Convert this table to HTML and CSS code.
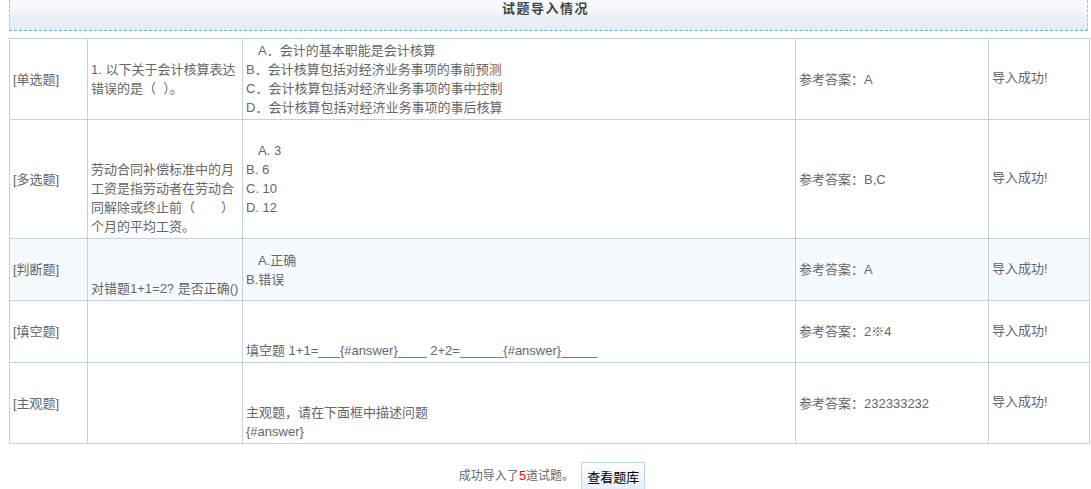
FILE: index.html
```html
<!DOCTYPE html>
<html lang="zh-CN">
<head>
<meta charset="utf-8">
<title>试题导入情况</title>
<link rel="stylesheet" href="styles.css">
</head>
<body>
<div class="page">
  <div class="header"><h1 class="title">试题导入情况</h1></div>
  <table class="result">
    <colgroup>
      <col class="c-type"><col class="c-q"><col class="c-opt"><col class="c-ans"><col class="c-st">
    </colgroup>
    <tbody>
      <tr>
        <td>[单选题]</td>
        <td>1. 以下关于会计核算表达错误的是（&nbsp;&nbsp;）。</td>
        <td class="opts">A．会计的基本职能是会计核算<br>B．会计核算包括对经济业务事项的事前预测<br>C．会计核算包括对经济业务事项的事中控制<br>D．会计核算包括对经济业务事项的事后核算</td>
        <td>参考答案：A</td>
        <td class="st">导入成功!</td>
      </tr>
      <tr>
        <td>[多选题]</td>
        <td><br><br>劳动合同补偿标准中的月工资是指劳动者在劳动合同解除或终止前（　　）个月的平均工资。</td>
        <td class="opts">A. 3<br>B. 6<br>C. 10<br>D. 12</td>
        <td>参考答案：B,C</td>
        <td class="st">导入成功!</td>
      </tr>
      <tr class="alt">
        <td>[判断题]</td>
        <td class="nowrap"><br><br>对错题1+1=2? 是否正确()</td>
        <td class="opts">A.正确<br>B.错误</td>
        <td>参考答案：A</td>
        <td class="st">导入成功!</td>
      </tr>
      <tr>
        <td>[填空题]</td>
        <td></td>
        <td><br><br>填空题 1+1=___{#answer}____ 2+2=______{#answer}_____</td>
        <td>参考答案：2※4</td>
        <td class="st">导入成功!</td>
      </tr>
      <tr>
        <td>[主观题]</td>
        <td></td>
        <td><br><br>主观题，请在下面框中描述问题<br>{#answer}</td>
        <td>参考答案：232333232</td>
        <td class="st">导入成功!</td>
      </tr>
    </tbody>
  </table>
  <div class="footer">
    <span class="summary">成功导入了<em class="count">5</em>道试题。</span>
    <button class="btn" type="button">查看题库</button>
  </div>
</div>
</body>
</html>
```

FILE: styles.css
```css
html, body {
  margin: 0;
  padding: 0;
  background: #ffffff;
}

body {
  font-family: "Liberation Sans", "Noto Sans CJK SC", sans-serif;
  font-size: 13px;
  color: #666666;
}

.page {
  padding: 0 1px 0 9px;
}

.header {
  height: 31px;
  margin-right: 2px;
  border-left: 1px dashed #b4bcc6;
  border-right: 1px dashed #9fc4da;
  border-bottom: 1px dashed #5eb0d8;
  background: linear-gradient(to bottom, #fbfcfe 0%, #e3eaf2 100%);
  box-sizing: border-box;
}

.title {
  margin: 0;
  padding: 1px 6px 0 0;
  text-align: center;
  font-size: 13px;
  line-height: 16px;
  font-weight: bold;
  letter-spacing: 1.5px;
  color: #444444;
}

.result {
  margin-top: 7px;
  width: 1081px;
  table-layout: fixed;
  border-collapse: collapse;
}

.c-type { width: 78px; }
.c-q { width: 155px; }
.c-opt { width: 553px; }
.c-ans { width: 193px; }
.c-st { width: 101px; }

.result td {
  border: 1px solid #bfd2e2;
  padding: 2px 2px 2px 3px;
  line-height: 19px;
  vertical-align: middle;
  text-align: left;
  word-break: break-all;
}

.result td.st {
  padding-bottom: 5px;
}

.result tr.alt td {
  background: #f5faff;
}

.opts {
  text-indent: 12px;
}

.nowrap {
  white-space: nowrap;
}

.footer {
  display: flex;
  justify-content: center;
  align-items: center;
  gap: 7px;
  margin-top: 18px;
  padding-left: 5px;
}

.summary {
  font-size: 12px;
  line-height: 19px;
}

.count {
  font-style: normal;
  font-size: 13px;
  color: #ff0000;
}

.btn {
  height: 28px;
  padding: 0 5px;
  border: 1px solid #b7d5ec;
  background: linear-gradient(to bottom, #ffffff 0%, #e7eff8 100%);
  font-family: "Liberation Sans", "Noto Sans CJK SC", sans-serif;
  font-size: 13px;
  color: #000000;
}
```
